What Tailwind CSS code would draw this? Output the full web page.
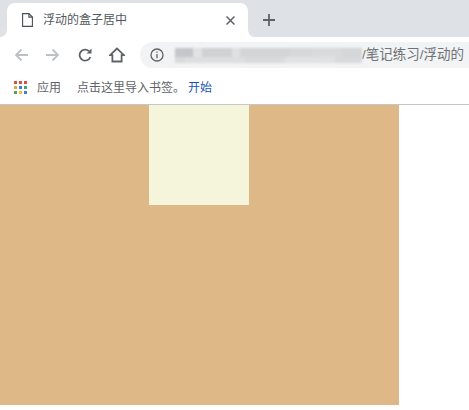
<!DOCTYPE html>
<html lang="zh">
<head>
  <meta charset="UTF-8">
  <title>浮动的盒子居中</title>
  <script src="https://cdn.jsdelivr.net/npm/@tailwindcss/browser@4"></script>
</head>
<body class="bg-white h-screen overflow-hidden flex flex-col font-['Liberation_Sans','Noto_Sans_CJK_SC',sans-serif]">
  <!-- Tab strip -->
  <div class="h-[37px] shrink-0 bg-[#dee1e6] flex items-end">
    <svg class="shrink-0" width="7" height="8" viewBox="0 0 7 8"><path d="M0 8h7V0C7 5 4 8 0 8z" fill="#fff"/></svg>
    <div class="w-[241px] h-[34px] shrink-0 bg-white rounded-t-lg flex items-center pl-[15px] pr-[13px]">
      <svg class="shrink-0" width="11" height="14" viewBox="0 0 11 14" fill="none" stroke="#4a4d52" stroke-width="1.1">
        <path d="M.6.6h6.3l3.5 3.5v9.3H.6z"/>
        <path d="M6.9.6v3.5h3.5"/>
      </svg>
      <span class="ml-[10px] text-xs text-[#55585c] flex-1">浮动的盒子居中</span>
      <svg width="9" height="9" viewBox="0 0 9 9" stroke="#5f6368" stroke-width="1.5">
        <path d="M.5.5l8 8M8.5.5l-8 8"/>
      </svg>
    </div>
    <svg class="shrink-0" width="7" height="8" viewBox="0 0 7 8"><path d="M0 0v8h7C3 8 0 5 0 0z" fill="#fff"/></svg>
    <div class="h-[34px] flex items-center ml-[8px]">
      <svg width="12" height="12" viewBox="0 0 12 12" stroke="#5f6368" stroke-width="1.8">
        <path d="M6 0v12M0 6h12"/>
      </svg>
    </div>
  </div>

  <!-- Toolbar -->
  <div class="h-[36px] shrink-0 bg-white flex items-center">
    <div class="w-[140px] shrink-0 flex items-center pl-[14px]">
      <svg width="14" height="14" viewBox="0 0 14 14" fill="none" stroke="#bdc1c6" stroke-width="1.8">
        <path d="M14 7H2M7.500 1.500L2 7l5.500 5.500"/>
      </svg>
      <svg class="ml-[18px]" width="14" height="14" viewBox="0 0 14 14" fill="none" stroke="#bdc1c6" stroke-width="1.8">
        <path d="M0 7h12M6.500 1.500L12 7l-5.500 5.500"/>
      </svg>
      <svg class="ml-[18px]" width="14" height="14" viewBox="0 0 14 14" fill="none" stroke="#5f6368" stroke-width="1.8">
        <path d="M12.300 9A5.500 5.500 0 1 1 11 3.200"/>
        <path d="M13.500 .5v5h-5z" fill="#5f6368" stroke="none"/>
      </svg>
      <svg class="ml-[17px]" width="16" height="16" viewBox="0 0 16 16" fill="none" stroke="#5f6368" stroke-width="1.8">
        <path d="M8 1.500L1 8.200h2.400v6.300h9.200V8.200H15z"/>
      </svg>
    </div>
    <div class="flex-1 h-[26px] bg-[#f1f3f4] rounded-l-full flex items-center pl-[10px] overflow-hidden">
      <svg class="shrink-0" width="14" height="14" viewBox="0 0 14 14" fill="none" stroke="#5f6368" stroke-width="1.3">
        <circle cx="7" cy="7" r="6"/>
        <path d="M7 6v4.200M7 3.400v1.400"/>
      </svg>
      <!-- blurred part of the url -->
      <div class="shrink-0 ml-[11px] w-[187px] h-[15px] flex flex-col blur-[1px]">
        <div class="h-[9px] flex">
          <div class="w-[18px] bg-[#c4c6c9]"></div>
          <div class="w-[9px] bg-[#e0e2e3]"></div>
          <div class="w-[30px] bg-[#cfd1d3]"></div>
          <div class="w-[8px] bg-[#dfe1e2]"></div>
          <div class="w-[50px] bg-[#d3d5d7]"></div>
          <div class="w-[22px] bg-[#d6d8da]"></div>
          <div class="w-[30px] bg-[#d8dadc]"></div>
          <div class="w-[20px] bg-[#d4d6d8]"></div>
        </div>
        <div class="h-[6px] flex">
          <div class="w-[10px] bg-[#d8dadc]"></div>
          <div class="w-[60px] bg-[#dcdedf]"></div>
          <div class="w-[40px] bg-[#d8dadc]"></div>
          <div class="w-[50px] bg-[#e0e2e3]"></div>
          <div class="w-[27px] bg-[#d8dadc]"></div>
        </div>
      </div>
      <span class="shrink-0 text-[13.5px] text-[#6f7276] whitespace-nowrap">/笔记练习/浮动的</span>
    </div>
  </div>

  <!-- Bookmarks bar -->
  <div class="h-[32px] shrink-0 bg-white border-b border-[#c4c6c8] flex items-center pl-[14px] pb-[2px] text-xs">
    <div class="grid grid-cols-3 gap-[2px] w-[13px]">
      <i class="size-[3px] bg-[#d9503f]"></i><i class="size-[3px] bg-[#d9503f]"></i><i class="size-[3px] bg-[#d9503f]"></i>
      <i class="size-[3px] bg-[#e8a33d]"></i><i class="size-[3px] bg-[#3c7fd9]"></i><i class="size-[3px] bg-[#4aa564]"></i>
      <i class="size-[3px] bg-[#4aa564]"></i><i class="size-[3px] bg-[#e8c23d]"></i><i class="size-[3px] bg-[#3c7fd9]"></i>
    </div>
    <span class="ml-[10px] text-[#5f6368]">应用</span>
    <span class="ml-[16px] text-[#5f6368]">点击这里导入书签。</span>
    <span class="ml-[3px] text-[#1a56b0]">开始</span>
  </div>

  <!-- Page -->
  <div class="w-[399px] h-[300px] shrink-0 bg-[#deb887] pl-[149px]">
    <div class="w-[100px] h-[100px] bg-[#f5f5dc]"></div>
  </div>
</body>
</html>
